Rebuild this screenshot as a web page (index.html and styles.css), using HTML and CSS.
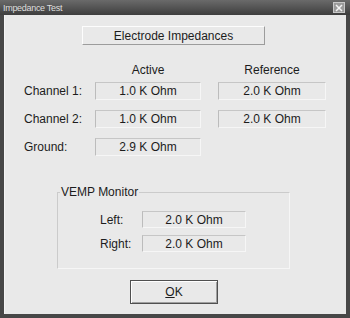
FILE: index.html
```html
<!DOCTYPE html>
<html lang="en">
    <head>
        <meta charset="utf-8" />
        <title>Impedance Test</title>
        <link rel="stylesheet" href="styles.css">
    </head>
    <body>
        <div class="window">
            <div class="titlebar">
                <span class="title">Impedance Test</span>
                <span class="close">
                    <svg width="8" height="8" viewBox="0 0 8 8"><path d="M1 1L7 7M7 1L1 7" stroke="#f4f4f4" stroke-width="1.5"/></svg>
                </span>
            </div>
            <div class="client">
                <button class="btn wide">Electrode Impedances</button>
                <div class="cols head">
                    <span></span><span>Active</span><span>Reference</span>
                </div>
                <div class="cols rows">
                    <span class="lbl">Channel 1:</span><span class="val">1.0 K Ohm</span><span class="val">2.0 K Ohm</span>
                    <span class="lbl">Channel 2:</span><span class="val">1.0 K Ohm</span><span class="val">2.0 K Ohm</span>
                    <span class="lbl">Ground:</span><span class="val">2.9 K Ohm</span>
                </div>
                <fieldset class="group">
                    <legend>VEMP Monitor</legend>
                    <div class="vrows">
                        <span class="lbl">Left:</span><span class="val">2.0 K Ohm</span>
                        <span class="lbl">Right:</span><span class="val">2.0 K Ohm</span>
                    </div>
                </fieldset>
                <button class="btn ok"><u>O</u>K</button>
            </div>
        </div>
    </body>
</html>
```
FILE: styles.css
```css
* { margin: 0; padding: 0; box-sizing: border-box; }
body { font-family: "Liberation Sans", Arial, sans-serif; font-size: 12px; color: #1c1c1c; background: #fff; }

.window {
    width: 350px;
    height: 318px;
    display: flex;
    flex-direction: column;
    background: #474747;}
.titlebar {
    height: 15px;
    display: flex;
    align-items: center;
    justify-content: space-between;
    padding: 0 5px 0 3px;
    background: linear-gradient(#6a6a6a, #3e3e3e);}
.title { color: #dedede; font-size: 9px; letter-spacing: -0.3px; }
.close {
    width: 12px;
    height: 11px;
    display: flex;
    align-items: center;
    justify-content: center;
    background: #9a9a9a;
    border: 1px solid #c8c8c8;}

.client {
    flex: 1;
    margin: 0 4px 4px 4px;
    background: #e9e9e9;
    border-left: 1px solid #f4f4f4;
    display: flex;
    flex-direction: column;
    align-items: flex-start;}

.btn {
    font-family: inherit;
    font-size: 12px;
    color: #1c1c1c;
    background: #e9e9e9;
    border: 1px solid;
    border-color: #fdfdfd #9c9c9c #9c9c9c #fdfdfd;}
.wide { width: 183px; height: 19px; margin: 11px 0 0 77px; }
.ok {
    width: 88px;
    height: 24px;
    margin: 11px 0 0 125px;
    border-color: #505050;
    box-shadow: inset 1px 1px #fff, inset -1px -1px #a0a0a0;}

.cols {
    display: grid;
    grid-template-columns: 54px 106px 108px;
    column-gap: 17px;
    margin-left: 19px;}
.head { margin-top: 18px; line-height: 14px; text-align: center; }
.rows { margin-top: 5px; grid-auto-rows: 18px; row-gap: 10px; align-items: center; }
.lbl { white-space: nowrap; }

.val {
    height: 100%;
    display: flex;
    align-items: center;
    justify-content: center;
    border: 1px solid;
    border-color: #c6c6c6 #f6f6f6 #f6f6f6 #bcbcbc;}

.group {
    margin: 29px 0 0 52px;
    width: 233px;
    padding: 12px 0 16px 0;
    border: 1px solid;
    border-color: #cbcbcb #f6f6f6 #f6f6f6 #cbcbcb;}
.group legend { line-height: 14px; margin-left: 2px; padding: 0 1px; }
.vrows {
    display: grid;
    grid-template-columns: 42px 104px;
    grid-auto-rows: 17px;
    row-gap: 7px;
    align-items: center;
    margin-left: 42px;}
```
